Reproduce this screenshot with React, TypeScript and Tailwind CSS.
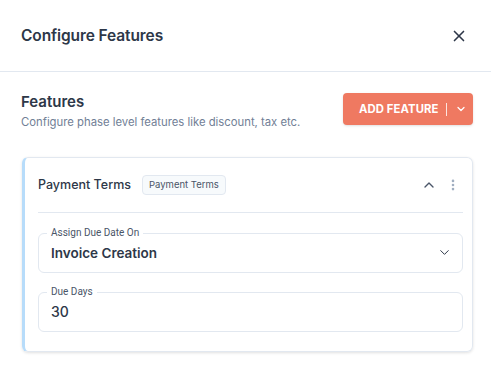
import { ChevronDown, ChevronUp, EllipsisVertical, X } from "lucide-react";

function OutlinedField({ label, children }: { label: string; children: React.ReactNode }) {
  return (
    <div className="relative rounded-md border border-[#e2e8f0] h-[40px] flex items-center pl-3 pr-[10px]">
      <span className="absolute -top-[8px] left-[8px] bg-white px-[4px] text-[10px] leading-[14px] text-[#4a5568] font-['Roboto',sans-serif]">
        {label}
      </span>
      {children}
    </div>
  );
}

export default function App() {
  return (
    <div className="w-[491px] h-[367px] bg-white font-['Inter',sans-serif] text-[#2d3748] overflow-hidden">
      <header className="h-[72px] flex items-center justify-between px-[21px] border-b border-[#e2e8f0]">
        <h1 className="text-[15.5px] font-semibold tracking-[-0.1px]">Configure Features</h1>
        <button className="mr-[2px] text-[#2d3748]">
          <X size={18} strokeWidth={2.2} />
        </button>
      </header>

      <main className="px-[21px] pt-[21px]">
        <div className="flex items-start justify-between">
          <div>
            <h2 className="text-[15px] font-semibold leading-[18px]">Features</h2>
            <p className="mt-[3px] text-[11.3px] text-[#718096]">
              Configure phase level features like discount, tax etc.
            </p>
          </div>
          <button className="h-[32px] w-[130px] mr-[-3px] rounded-[4px] bg-[#ef7961] text-white flex items-center pl-[16px] shadow-sm">
            <span className="text-[11.3px] font-bold tracking-[0.1px]">ADD FEATURE</span>
            <span className="ml-[7px] mr-[8px] h-[13px] w-px bg-white/80" />
            <ChevronDown size={12} strokeWidth={2.5} />
          </button>
        </div>

        <section className="mt-[26px] ml-[1px] mr-[-3px] rounded-md border border-[#e2e8f0] border-l-[3px] border-l-[#b7dcfa] shadow-[0_1px_3px_rgba(0,0,0,0.12)] pl-[13px] pr-[9px] pb-[19px]">
          <div className="h-[55px] flex items-center justify-between border-b border-[#e2e8f0]">
            <div className="flex items-center gap-[11px]">
              <span className="text-[12.5px] font-medium">Payment Terms</span>
              <span className="rounded-[4px] border border-[#e2e8f0] bg-[#f7fafc] px-[6px] py-[2px] text-[9.5px] text-[#4a5568]">
                Payment Terms
              </span>
            </div>
            <div className="flex items-center gap-[9px] pr-[3px] text-[#4a5568]">
              <ChevronUp size={16} strokeWidth={2} />
              <EllipsisVertical size={14} strokeWidth={2.5} className="text-[#a0aec0]" />
            </div>
          </div>

          <div className="mt-[20px] flex flex-col gap-[19px]">
            <OutlinedField label="Assign Due Date On">
              <span className="flex-1 text-[13.5px] font-semibold text-[#2d3748]">Invoice Creation</span>
              <ChevronDown size={15} strokeWidth={1.6} className="text-[#2d3748]" />
            </OutlinedField>
            <OutlinedField label="Due Days">
              <span className="text-[14px] font-medium text-[#2d3748]">30</span>
            </OutlinedField>
          </div>
        </section>
      </main>
    </div>
  );
}
